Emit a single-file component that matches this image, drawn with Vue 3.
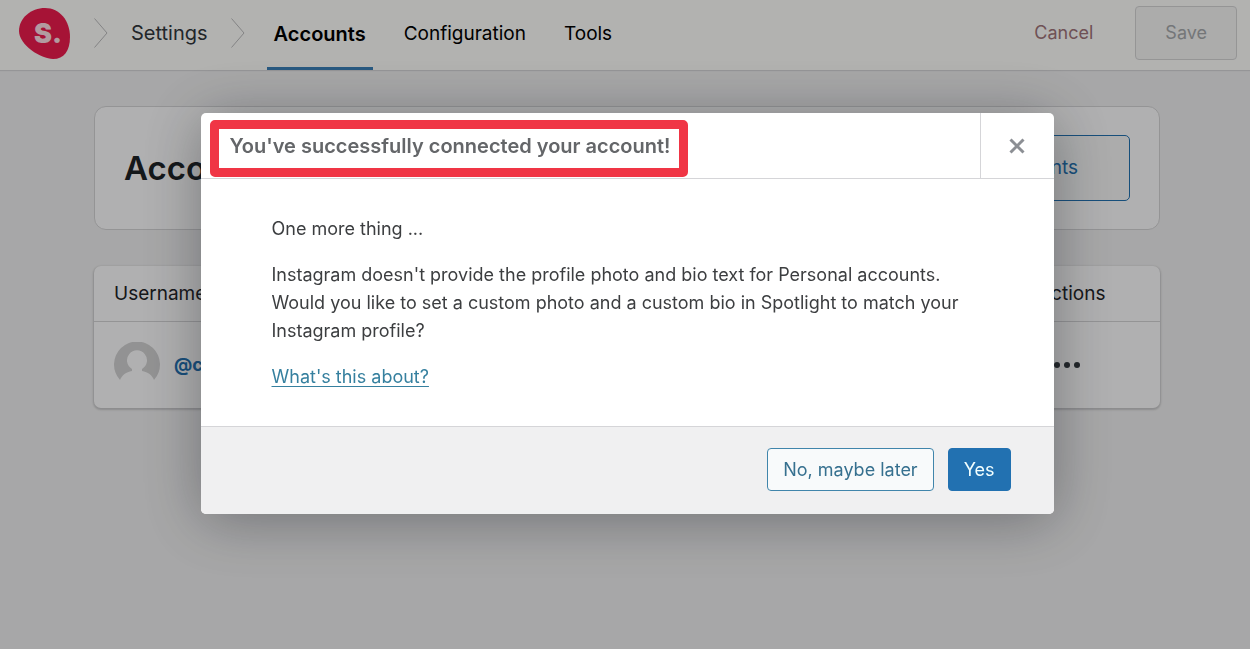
<script setup>
const tabs = [
  { label: 'Accounts', active: true },
  { label: 'Configuration', active: false },
  { label: 'Tools', active: false },
]
</script>

<template>
  <div class="page">
    <header class="topbar">
      <svg class="logo" viewBox="0 0 52 52" role="img" aria-label="Spotlight">
        <path d="M26 0C41 0 51 13 51 29C51 43 45 51 34 51C22 51 0 37 0 23C0 10 12 0 26 0Z" fill="#ee1c4e" />
        <text x="15" y="35" class="logo-text">S.</text>
      </svg>
      <svg class="chevron" viewBox="0 0 14 30" aria-hidden="true"><path d="M0.500 0.500L13 15L0.500 29.500" /></svg>
      <a class="crumb" href="#settings">Settings</a>
      <svg class="chevron" viewBox="0 0 14 30" aria-hidden="true"><path d="M0.500 0.500L13 15L0.500 29.500" /></svg>
      <nav class="tabs">
        <a v-for="tab in tabs" :key="tab.label" href="#tab" :class="['tab', { active: tab.active }]">{{ tab.label }}</a>
      </nav>
      <div class="top-actions">
        <button type="button" class="cancel">Cancel</button>
        <button type="button" class="save" disabled>Save</button>
      </div>
    </header>

    <main class="content">
      <section class="panel">
        <h1>Accounts</h1>
        <button type="button" class="connect">Connect more accounts</button>
      </section>

      <table class="accounts">
        <thead>
          <tr>
            <th scope="col">Username</th>
            <th scope="col" class="actions-col">Actions</th>
          </tr>
        </thead>
        <tbody>
          <tr>
            <td>
              <div class="user">
                <svg class="avatar" viewBox="0 0 46 46" aria-hidden="true">
                  <path d="M6 38A23 23 0 1 1 40 38C38 33 34 30 28 29V27A10 10 0 1 0 18 27V29C12 30 8 33 6 38Z" fill="#d2d2d3" />
                </svg>
                <a class="handle" href="#account">@creator</a>
              </div>
            </td>
            <td class="actions-col">
              <button type="button" class="more" aria-label="Account actions">
                <svg viewBox="0 0 26 6" aria-hidden="true">
                  <circle cx="3" cy="3" r="3" /><circle cx="13" cy="3" r="3" /><circle cx="23" cy="3" r="3" />
                </svg>
              </button>
            </td>
          </tr>
        </tbody>
      </table>
    </main>

    <div class="overlay">
      <section class="modal" role="dialog" aria-modal="true" aria-labelledby="modal-title">
        <header class="modal-head">
          <h2 id="modal-title">You've successfully connected your account!</h2>
          <button type="button" class="close" aria-label="Close">
            <svg viewBox="0 0 16 16" aria-hidden="true"><path d="M1.500 1.500L14.500 14.500M14.500 1.500L1.500 14.500" /></svg>
          </button>
        </header>
        <div class="modal-body">
          <p>One more thing ...</p>
          <p>
            Instagram doesn't provide the profile photo and bio text for Personal accounts. Would you like to set a
            custom photo and a custom bio in Spotlight to match your Instagram profile?
          </p>
          <p><a href="#about">What's this about?</a></p>
        </div>
        <footer class="modal-foot">
          <button type="button" class="btn secondary">No, maybe later</button>
          <button type="button" class="btn primary">Yes</button>
        </footer>
      </section>
    </div>
  </div>
</template>

<style>
body {
  margin: 0;
}
</style>

<style scoped>
.page {
  min-height: 100vh;
  background: #f0f0f1;
  color: #1d2327;
  font-family: Inter, "Liberation Sans", sans-serif;
  font-size: 19px;
  line-height: 28px;
}
.page *,
.page *::after {
  box-sizing: border-box;
}
button {
  font: inherit;
  cursor: pointer;
}
.topbar {
  display: flex;
  align-items: center;
  height: 70px;
  padding: 0 13px 4px 19px;
  background: #fffffd;
  box-shadow: 0 1px 1px #d6d6d8;
}
.logo {
  width: 52px;
  height: 52px;
  margin-top: 2px;
  flex: none;
}
.logo-text {
  font: 900 27px Inter, sans-serif;
  fill: #ffdfe6;
}
.chevron {
  width: 14px;
  height: 30px;
  margin: 0 23px;
  flex: none;
  fill: none;
  stroke: #bcbcbd;
  stroke-width: 1;
}
.crumb {
  color: #32373c;
  font-size: 20px;
  text-decoration: none;
}
.tabs {
  display: flex;
  align-self: stretch;
  gap: 24px;
  margin: 0 0 -4px -1px;
}
.tab {
  display: flex;
  align-items: center;
  padding: 0 7px;
  border-bottom: 3px solid transparent;
  color: #000;
  text-decoration: none;
}
.tab.active {
  border-bottom-color: #3a80b8;
  font-size: 20px;
  font-weight: 600;
}
.top-actions {
  display: flex;
  align-items: center;
  gap: 42px;
  margin-left: auto;
  font-size: 18px;
}
.cancel {
  padding: 0;
  border: 0;
  background: none;
  color: #a0747a;
}
.save {
  height: 54px;
  padding: 0 29px;
  border: 1px solid #d6d6d6;
  border-radius: 4px;
  background: #f6f6f5;
  color: #a7aaad;
}
.content {
  padding: 36px 90px 40px 94px;
}
.panel {
  display: flex;
  align-items: center;
  justify-content: space-between;
  height: 124px;
  padding: 0 29px;
  border: 1px solid #d4d4d6;
  border-radius: 12px;
  background: #fdfdfe;
}
h1 {
  margin: 0;
  font-size: 33px;
  line-height: 44px;
  font-weight: 600;
}
.connect {
  height: 66px;
  padding: 0 51px;
  border: 1px solid #2271b1;
  border-radius: 5px;
  background: #f6f7f7;
  color: #2271b1;
}
.accounts {
  width: 100%;
  margin-top: 36px;
  border-spacing: 0;
  border-radius: 7px;
  background: #fdfdfe;
  box-shadow: 0 1px 2px 1px #c8c8ca;
  text-align: left;
}
th {
  height: 56px;
  padding: 0 20px;
  border-bottom: 1px solid #d4d4d6;
  font-weight: 400;
}
td {
  height: 86px;
  padding: 0 20px;
}
.accounts .actions-col {
  width: 122px;
  padding: 0;
}
.user {
  display: flex;
  align-items: center;
  gap: 14px;
}
.avatar {
  width: 46px;
  height: 46px;
}
.handle {
  color: #2271b1;
  font-size: 18px;
  font-weight: 700;
  text-decoration: none;
}
.more {
  display: grid;
  place-items: center;
  width: 58px;
  height: 40px;
  padding: 0;
  border: 0;
  background: none;
}
.more svg {
  width: 26px;
  height: 6px;
  fill: #32373c;
}
.overlay {
  position: fixed;
  inset: 0;
  display: flex;
  align-items: flex-start;
  justify-content: center;
  padding: 113px 16px 16px 20px;
  background: rgba(0, 0, 0, 0.3);
}
.modal {
  width: 100%;
  max-width: 853px;
  border-radius: 5px;
  background: #fff;
  box-shadow: 0 6px 60px rgba(20, 24, 32, 0.38);
}
.modal-head {
  display: flex;
  align-items: center;
  justify-content: space-between;
  height: 66px;
  padding-left: 29px;
  border-bottom: 1px solid #d5d5d8;
}
h2 {
  position: relative;
  margin: 0;
  color: #646669;
  font-size: 20px;
  line-height: 30px;
  font-weight: 600;
}
h2::after {
  content: "";
  position: absolute;
  inset: -11px -18px -16px -20px;
  border: 9px solid #f03545;
  border-radius: 5px;
  pointer-events: none;
}
.close {
  display: grid;
  place-items: center;
  align-self: stretch;
  width: 74px;
  padding: 0;
  border: 0;
  border-left: 1px solid #d5d5d8;
  background: none;
}
.close svg {
  width: 16px;
  height: 16px;
  fill: none;
  stroke: #8c8f94;
  stroke-width: 3;
}
.modal-body {
  display: grid;
  gap: 18px;
  padding: 36px 71px 35px;
  color: #3c3e40;
  font-size: 18px;
}
.modal-body p {
  margin: 0;
}
.modal-body a {
  color: #36809f;
  text-underline-offset: 3px;
}
.modal-foot {
  display: flex;
  justify-content: flex-end;
  gap: 14px;
  padding: 21px 43px 23px;
  border-top: 1px solid #d5d5d8;
  border-radius: 0 0 5px 5px;
  background: #f0f0f1;
}
.btn {
  height: 43px;
  padding: 1px 15px 0;
  border: 1px solid #2271b1;
  border-radius: 4px;
  font-size: 18px;
}
.secondary {
  border-color: #4085ab;
  background: #f8fafb;
  color: #36708f;
}
.primary {
  background: #2271b1;
  color: #f2ffff;
}
</style>
